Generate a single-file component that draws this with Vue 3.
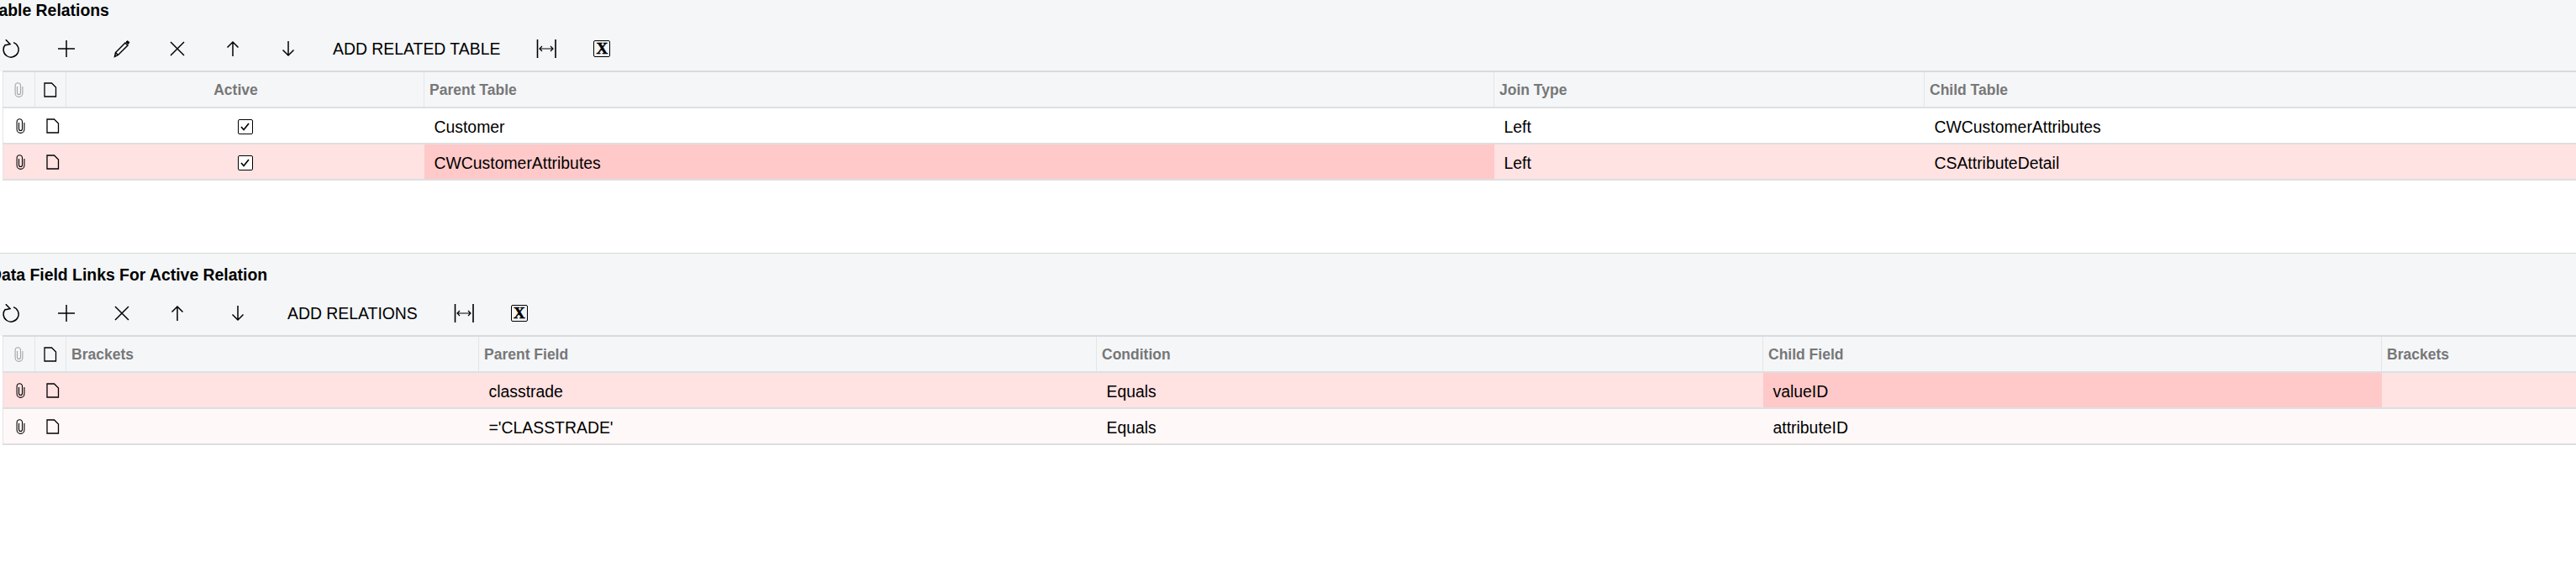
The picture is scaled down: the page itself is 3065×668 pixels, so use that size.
<script setup>
const relationCols = [
  { label: 'Active', width: 426, center: true },
  { label: 'Parent Table', width: 1273 },
  { label: 'Join Type', width: 512 },
  { label: 'Child Table', width: 800 },
]
const relationRows = [
  { cells: ['', 'Customer', 'Left', 'CWCustomerAttributes'], check: true },
  { cells: ['', 'CWCustomerAttributes', 'Left', 'CSAttributeDetail'], check: true, tone: 'hot', hotCell: 1 },
]

const linkCols = [
  { label: 'Brackets', width: 491 },
  { label: 'Parent Field', width: 735 },
  { label: 'Condition', width: 793 },
  { label: 'Child Field', width: 736 },
  { label: 'Brackets', width: 260 },
]
const linkRows = [
  { cells: ['', 'classtrade', 'Equals', 'valueID', ''], tone: 'hot', hotCell: 3 },
  { cells: ['', "='CLASSTRADE'", 'Equals', 'attributeID', ''], tone: 'soft' },
]

const sections = [
  {
    title: 'Table Relations',
    cols: relationCols,
    rows: relationRows,
    tools: ['refresh', 'add', 'edit', 'remove', 'up', 'down'],
    action: 'ADD RELATED TABLE',
  },
  {
    title: 'Data Field Links For Active Relation',
    cols: linkCols,
    rows: linkRows,
    tools: ['refresh', 'add', 'remove', 'up', 'down'],
    action: 'ADD RELATIONS',
    wideLast: true,
  },
]

const iconPaths = {
  refresh: 'M14 3.6a9 9 0 1 1-9.5 2.4M4.8 0.2l5.2 5.4-6.4 1.4',
  add: 'M11 1v20M1 11h20',
  edit: 'M2.5 20.5l1-5L15 4l3 3L6.5 18.5zM4 16l2.5 2.5',
  remove: 'M3 3l16 16M19 3L3 19',
  up: 'M11 20V3M4.5 9.5L11 3l6.5 6.5',
  down: 'M11 2v17M4.5 12.5L11 19l6.5-6.5',
}
const clipPath = 'M4.5 5v7.5a2 2 0 0 0 4 0V4a3.2 3.2 0 0 0-6.4 0v9a4.4 4.4 0 0 0 8.8 0V5'
const filePath = 'M1 1h8.5l5 5v11H1z'
</script>

<template>
  <div class="page">
    <section v-for="(section, s) in sections" :key="section.title" class="panel" :class="{ first: s === 0 }">
      <h2 class="title">{{ section.title }}</h2>

      <div class="toolbar">
        <button
          v-for="(tool, t) in section.tools"
          :key="tool"
          class="tool"
          :class="{ wide: section.wideLast && t === section.tools.length - 1 }"
          type="button"
        >
          <svg width="22" height="22" viewBox="0 0 22 22" fill="none" stroke="#000" stroke-width="1.5">
            <path :d="iconPaths[tool]" />
            <path v-if="tool === 'edit'" d="M16 3l1-1a1 1 0 0 1 1.4 0l1 1a1 1 0 0 1 0 1.4l-1 1z" fill="#000" stroke-width="1" />
          </svg>
        </button>
        <button class="tool text" type="button">{{ section.action }}</button>
        <button class="tool" type="button">
          <svg width="24" height="22" viewBox="0 0 24 22" fill="none" stroke="#000">
            <path d="M1.5 0v22M23 0v22" stroke-width="1.6" />
            <path d="M4 11h16M7 8l-3 3 3 3M17 8l3 3-3 3" stroke-width="1.2" />
          </svg>
        </button>
        <button class="tool" type="button"><span class="excel">X</span></button>
      </div>

      <table class="grid">
        <colgroup>
          <col class="narrow" />
          <col class="narrow" />
          <col v-for="(col, i) in section.cols" :key="i" :style="{ width: col.width + 'px' }" />
        </colgroup>
        <thead>
          <tr>
            <th class="icon-cell">
              <svg class="clip muted" width="13" height="18" viewBox="0 0 13 18" fill="none" stroke-width="1.1">
                <path :d="clipPath" />
              </svg>
            </th>
            <th class="icon-cell">
              <svg width="16" height="18" viewBox="0 0 16 18" fill="none" stroke="#000" stroke-width="1.3">
                <path :d="filePath" />
              </svg>
            </th>
            <th v-for="(col, i) in section.cols" :key="i" :class="{ center: col.center }">{{ col.label }}</th>
          </tr>
        </thead>
        <tbody>
          <tr v-for="(row, r) in section.rows" :key="r" :class="row.tone">
            <td class="icon-cell">
              <svg class="clip" width="13" height="18" viewBox="0 0 13 18" fill="none" stroke-width="1.1">
                <path :d="clipPath" />
              </svg>
            </td>
            <td class="icon-cell">
              <svg width="16" height="18" viewBox="0 0 16 18" fill="none" stroke="#000" stroke-width="1.3">
                <path :d="filePath" />
              </svg>
            </td>
            <td
              v-for="(cell, c) in row.cells"
              :key="c"
              :class="{ hotcell: row.hotCell === c, center: section.cols[c].center }"
            >
              <span v-if="row.check && c === 0" class="check">
                <svg width="11" height="10" viewBox="0 0 11 10" fill="none" stroke="#000" stroke-width="1.7">
                  <path d="M1 5l3 3.5L10 1" />
                </svg>
              </span>
              <template v-else>{{ cell }}</template>
            </td>
          </tr>
        </tbody>
      </table>
    </section>
  </div>
</template>

<style>
html,
body {
  overflow: hidden;
  background: #fff;
}
</style>

<style scoped>
.page {
  margin: -13px 0 0 -20px;
  width: 3085px;
  font-family: 'Liberation Sans', Arial, sans-serif;
  color: #000;
}

.panel {
  margin-bottom: 86px;
  border-top: 1px solid #d4d6d8;
  background: linear-gradient(#f4f6f8, #f4f6f8) no-repeat top / 100% 98px;
}

.panel.first {
  border-top: 0;
}

.title {
  margin: 0;
  padding: 14px 0 0 8px;
  height: 23px;
  box-sizing: content-box;
  font-size: 19.4px;
  line-height: 22px;
  font-weight: 700;
}

.toolbar {
  display: flex;
  align-items: center;
  height: 60px;
  padding-top: 8px;
  box-sizing: border-box;
}

.tool {
  display: flex;
  align-items: center;
  justify-content: center;
  width: 66px;
  height: 40px;
  padding: 0;
  border: 0;
  background: none;
  color: #000;
  font: inherit;
  font-size: 19.4px;
}

.tool.wide {
  width: 78px;
}

.tool.text {
  width: auto;
  padding: 0 22px 0 20px;
}

.excel {
  display: block;
  width: 20px;
  height: 20px;
  box-sizing: border-box;
  border: 1.5px solid #000;
  border-radius: 2px;
  font-family: 'Liberation Serif', serif;
  font-size: 19px;
  font-weight: 700;
  line-height: 17px;
  text-align: center;
  -webkit-text-stroke: 0.5px #000;
}

.grid {
  margin-left: 23px;
  width: 3062px;
  table-layout: fixed;
  border-collapse: collapse;
  border-top: 2px solid #d8dadc;
}

.narrow {
  width: 37.5px;
}

th,
td {
  height: 43px;
  box-sizing: border-box;
  white-space: nowrap;
  overflow: hidden;
  border-bottom: 2px solid #dddfe1;
}

th {
  padding: 2px 0 0 6px;
  background: #f4f6f8;
  border-right: 1px solid #e3e5e8;
  color: #777;
  font-size: 17.5px;
  font-weight: 700;
  text-align: left;
}

th.center {
  padding: 2px 22px 0 0;
  text-align: center;
}

td {
  padding: 4px 0 0 12px;
  font-size: 19.4px;
  background: #fff;
}

td.center {
  padding: 0;
  text-align: center;
}

th:first-child,
td:first-child {
  border-left: 1px solid #e3e5e8;
}

th.icon-cell {
  padding: 0;
  text-align: center;
}

td.icon-cell {
  padding: 0 0 0 14px;
}

.icon-cell svg {
  display: block;
}

th.icon-cell svg {
  margin: 0 auto;
}

.clip {
  stroke: #000;
}

.clip.muted {
  stroke: #a3a5a7;
}

.hot td {
  background: #ffe2e2;
}

.hot td.hotcell {
  background: #ffc9c9;
}

.soft td {
  background: #fff8f8;
}

.check {
  display: inline-flex;
  align-items: center;
  justify-content: center;
  width: 18px;
  height: 18px;
  box-sizing: border-box;
  border: 1.5px solid #000;
  border-radius: 2px;
  background: #fff;
  vertical-align: middle;
}
</style>
